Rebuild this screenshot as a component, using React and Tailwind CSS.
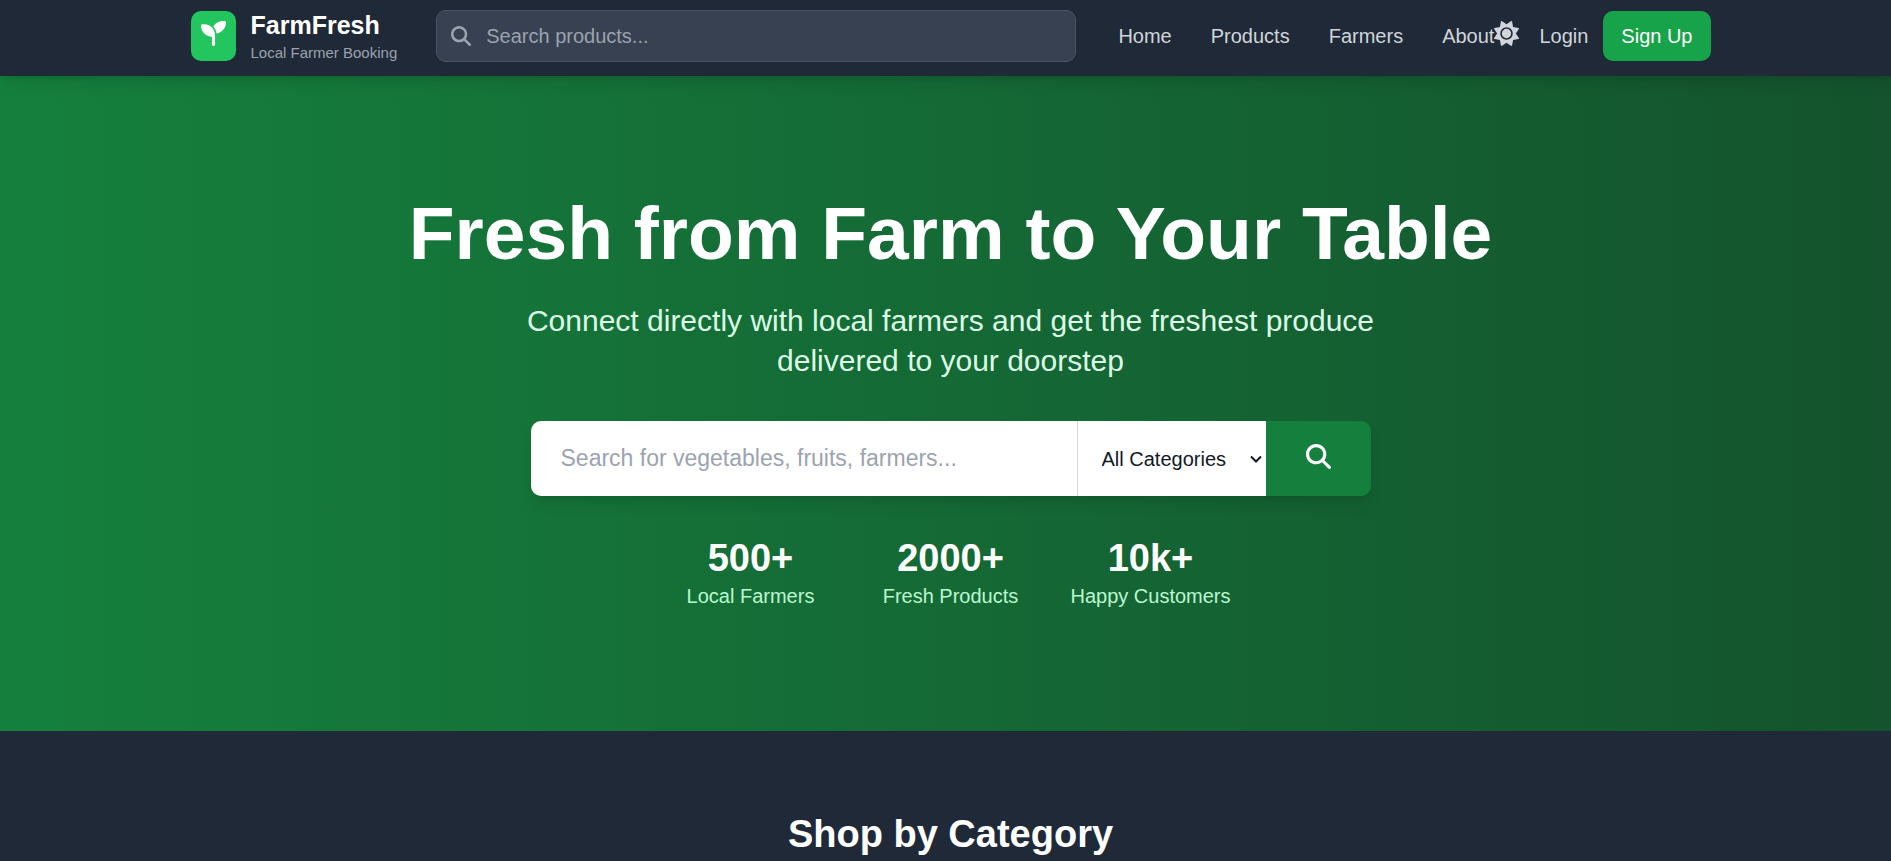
import { FaMagnifyingGlass, FaSeedling, FaSun } from "react-icons/fa6";

const links = ["Home", "Products", "Farmers", "About"];

const stats = [
  { value: "500+", label: "Local Farmers" },
  { value: "2000+", label: "Fresh Products" },
  { value: "10k+", label: "Happy Customers" },
];

function Header() {
  return (
    <header className="relative z-10 bg-[#1f2937] pt-2 pb-[13px] shadow-lg">
      <div className="mx-auto flex max-w-[1600px] items-center px-10">
        <a href="#home" className="flex shrink-0 items-center gap-[15px]">
          <span className="flex h-[50px] items-start rounded-[10px] bg-[#22c55e] p-[10px]">
            <FaSeedling className="size-[25px] text-white" aria-hidden="true" />
          </span>
          <span className="flex flex-col">
            <span className="text-[25px] leading-[35px] font-bold text-white">FarmFresh</span>
            <span className="text-[15px] leading-5 text-[#9ca3af]">Local Farmer Booking</span>
          </span>
        </a>
        <div className="mr-[42px] ml-[39px] flex h-[52px] flex-1 items-center gap-[15px] rounded-[10px] border border-[#4b5563] bg-[#374151] px-[14px]">
          <FaMagnifyingGlass className="size-5 shrink-0 text-[#9ca3af]" aria-hidden="true" />
          <input
            type="text"
            aria-label="Search products"
            placeholder="Search products..."
            className="min-w-0 flex-1 bg-transparent text-[20px] leading-[30px] text-white outline-none placeholder:text-[#9ca3af]"
          />
        </div>
        <nav className="flex shrink-0 gap-[39px] text-[20px] leading-[30px] text-[#d1d5db]">
          {links.map((link) => (
            <a key={link} href={"#" + link.toLowerCase()}>
              {link}
            </a>
          ))}
        </nav>
        <div className="flex shrink-0 items-center text-[20px] leading-[30px] text-[#d1d5db]">
          <button type="button" aria-label="Toggle theme" className="flex h-[30px] items-start">
            <FaSun className="size-[25px]" aria-hidden="true" />
          </button>
          <a href="#login" className="ml-5">
            Login
          </a>
          <a href="#signup" className="ml-[15px] rounded-[10px] bg-[#16a34a] px-[18px] py-[10px] text-white">
            Sign Up
          </a>
        </div>
      </div>
    </header>
  );
}

function Hero() {
  return (
    <section className="bg-linear-to-r/srgb from-[#15803d] to-[#14532d] py-[120px] text-center">
      <h1 className="text-[75px] leading-[75px] font-bold text-white">Fresh from Farm to Your Table</h1>
      <p className="mx-auto mt-[30px] max-w-[880px] text-[30px] leading-10 text-[#dcfce7]">
        Connect directly with local farmers and get the freshest produce delivered to your doorstep
      </p>
      <form className="mx-auto mt-10 flex h-[75px] max-w-[840px] rounded-[10px] shadow-lg">
        <input
          type="text"
          aria-label="Search for vegetables, fruits, farmers"
          placeholder="Search for vegetables, fruits, farmers..."
          className="min-w-0 flex-1 rounded-l-[10px] bg-white px-[30px] text-[23px] text-[#111827] outline-none placeholder:text-[#9ca3af]"
        />
        <div className="relative flex w-[189px]">
          <select
            aria-label="Category"
            className="w-full appearance-none border-l border-[#d1d5db] bg-white pl-6 text-[20px] text-[#111827] outline-none"
          >
            <option>All Categories</option>
            <option>Vegetables</option>
            <option>Fruits</option>
          </select>
          <svg
            viewBox="0 0 12 8"
            className="pointer-events-none absolute top-[34px] right-1 h-2 w-3 fill-none stroke-[#111827] stroke-2"
            aria-hidden="true"
          >
            <path d="M1 1.5 L6 6.5 L11 1.5" />
          </svg>
        </div>
        <button type="button" aria-label="Search" className="rounded-r-[10px] bg-[#15803d] px-10 pb-1 text-white">
          <FaMagnifyingGlass className="size-[25px]" aria-hidden="true" />
        </button>
      </form>
      <dl className="mx-auto mt-10 grid max-w-[560px] grid-cols-3 gap-10">
        {stats.map((stat) => (
          <div key={stat.label} className="flex flex-col-reverse items-center">
            <dt className="text-[20px] leading-[30px] whitespace-nowrap text-[#bbf7d0]">{stat.label}</dt>
            <dd className="text-[38px] leading-[45px] font-bold text-white">{stat.value}</dd>
          </div>
        ))}
      </dl>
    </section>
  );
}

export default function App() {
  return (
    <div className="h-screen overflow-hidden bg-[#1f2937] font-['Liberation_Sans',Arial,sans-serif]">
      <div className="-mr-[10px]">
        <Header />
        <main>
          <Hero />
          <section className="py-20 text-center">
            <h2 className="text-[38px] leading-[47px] font-bold text-white">Shop by Category</h2>
          </section>
        </main>
      </div>
    </div>
  );
}
